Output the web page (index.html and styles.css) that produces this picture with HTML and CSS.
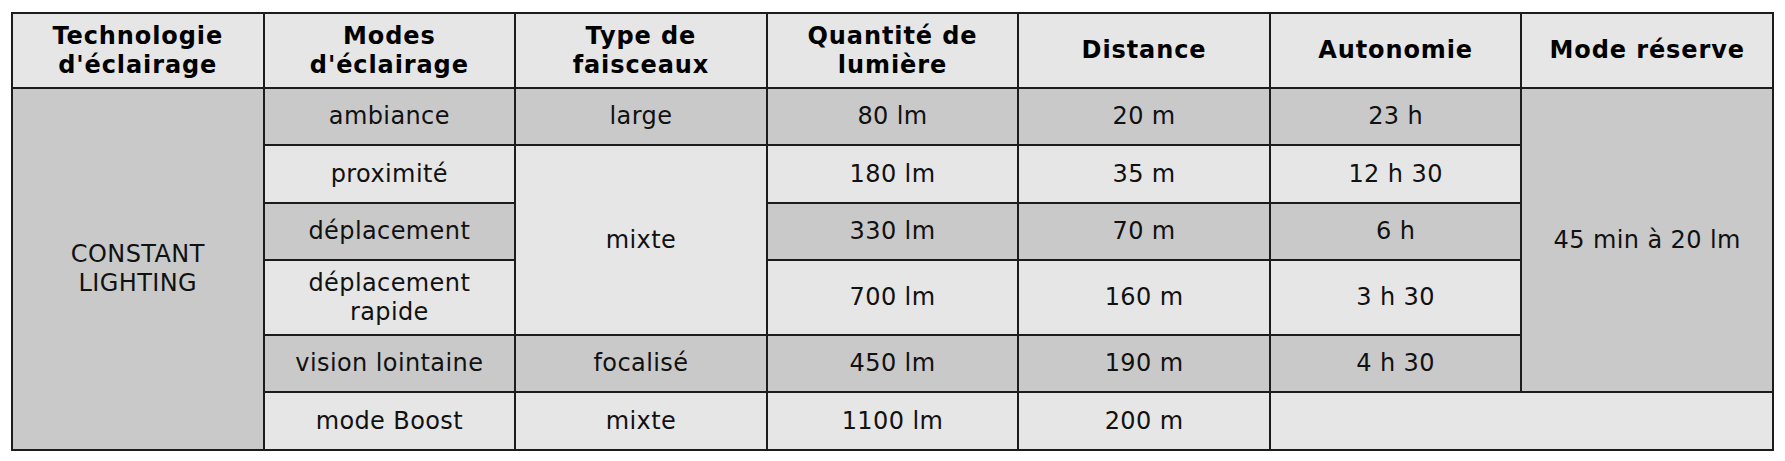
FILE: index.html
```html
<!DOCTYPE html>
<html lang="fr">
<head>
<meta charset="utf-8">
<title>Modes d'éclairage</title>
<link rel="stylesheet" href="styles.css">
</head>
<body>
<div class="page">
  <div class="table">
    <div class="cell head">Technologie<br>d'éclairage</div>
    <div class="cell head">Modes<br>d'éclairage</div>
    <div class="cell head">Type de<br>faisceaux</div>
    <div class="cell head">Quantité de<br>lumière</div>
    <div class="cell head">Distance</div>
    <div class="cell head">Autonomie</div>
    <div class="cell head">Mode réserve</div>

    <div class="cell dark span-tech">CONSTANT<br>LIGHTING</div>
    <div class="cell dark">ambiance</div>
    <div class="cell dark">large</div>
    <div class="cell dark">80 lm</div>
    <div class="cell dark">20 m</div>
    <div class="cell dark">23 h</div>
    <div class="cell dark span-reserve">45 min à 20 lm</div>

    <div class="cell">proximité</div>
    <div class="cell span-mixte">mixte</div>
    <div class="cell">180 lm</div>
    <div class="cell">35 m</div>
    <div class="cell">12 h 30</div>

    <div class="cell dark">déplacement</div>
    <div class="cell dark">330 lm</div>
    <div class="cell dark">70 m</div>
    <div class="cell dark">6 h</div>

    <div class="cell">déplacement<br>rapide</div>
    <div class="cell">700 lm</div>
    <div class="cell">160 m</div>
    <div class="cell">3 h 30</div>

    <div class="cell dark">vision lointaine</div>
    <div class="cell dark">focalisé</div>
    <div class="cell dark">450 lm</div>
    <div class="cell dark">190 m</div>
    <div class="cell dark">4 h 30</div>

    <div class="cell">mode Boost</div>
    <div class="cell">mixte</div>
    <div class="cell">1100 lm</div>
    <div class="cell">200 m</div>
    <div class="cell span-empty"></div>
  </div>
</div>
</body>
</html>
```
FILE: styles.css
```css
html, body {
  margin: 0;
  padding: 0;
  background: #ffffff;
}

.page {
  padding: 12px 11px 0 11px;
}

.table {
  width: 1763px;
  box-sizing: border-box;
  display: grid;
  grid-template-columns: repeat(7, 1fr);
  grid-template-rows: 73px 55px 56px 55px 73px 55px 56px;
  gap: 2px;
  padding: 2px;
  background: #1c1c1c;
  font-family: "DejaVu Sans", sans-serif;
  color: #111111;
}

.cell {
  display: flex;
  align-items: center;
  justify-content: center;
  text-align: center;
  background: #e6e6e6;
  font-size: 24px;
  line-height: 29px;
  letter-spacing: 0.4px;
}

.cell.dark {
  background: #c9c9c9;
}

.cell.head {
  font-weight: bold;
  font-size: 24px;
  letter-spacing: 0.9px;
  color: #000000;
}

.span-tech {
  grid-row: span 6;
}

.span-reserve {
  grid-row: span 5;
}

.span-mixte {
  grid-row: span 3;
}

.span-empty {
  grid-column: span 2;
}
```
